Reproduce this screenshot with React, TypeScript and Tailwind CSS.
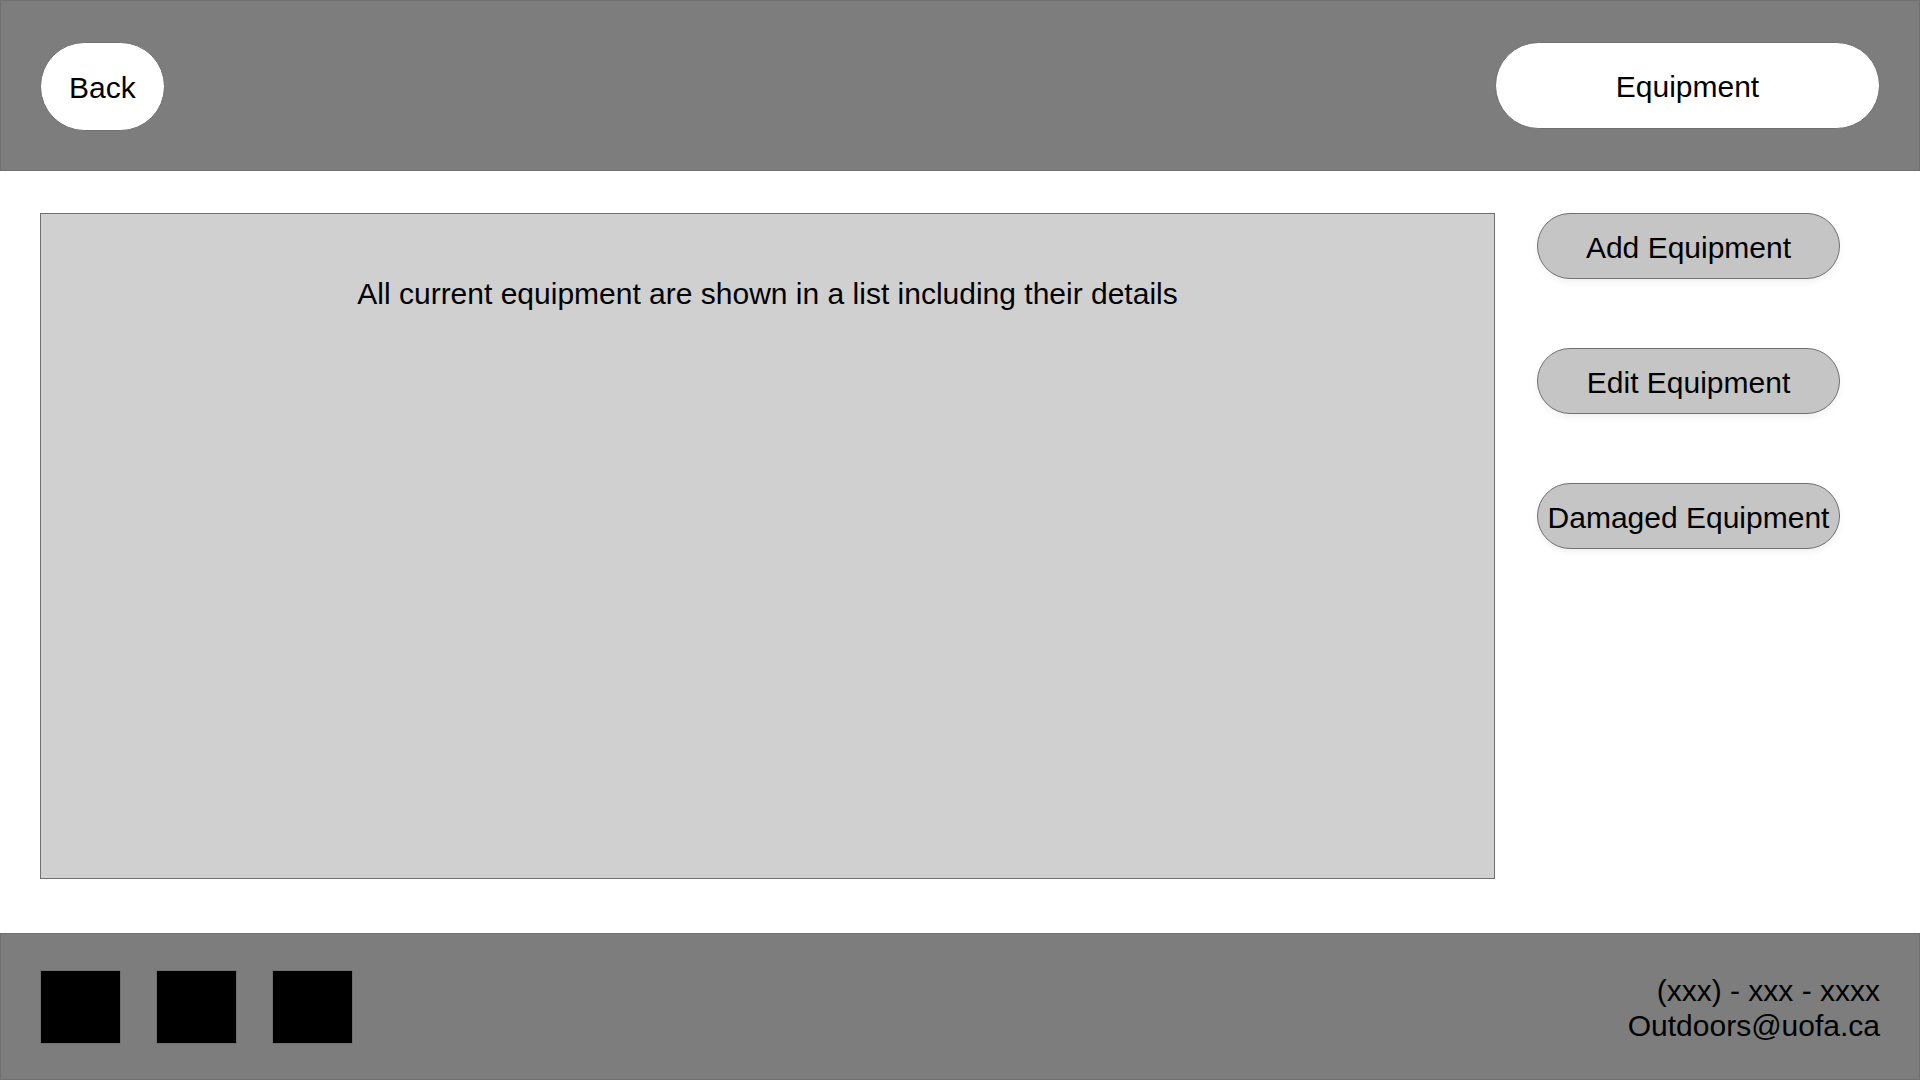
const actions = ["Add Equipment", "Edit Equipment", "Damaged Equipment"];
const socialLinks = ["Social link 1", "Social link 2", "Social link 3"];

export default function App() {
  return (
    <div className="flex min-h-screen flex-col bg-white font-['Liberation_Sans',Arial,sans-serif] text-[30px] leading-[35px] text-black">
      <header className="flex items-start justify-between border border-[#707070] bg-[#7d7d7d] px-[39px] pt-[41px] pb-[39px]">
        <button
          type="button"
          className="h-[89px] rounded-full border border-[#707070] bg-white px-7 pt-0.5"
        >
          Back
        </button>
        <h1 className="flex h-[87px] w-[385px] items-center justify-center rounded-full border border-[#707070] bg-white pt-0.5">
          Equipment
        </h1>
      </header>

      <main className="flex flex-1 gap-[42px] pt-[42px] pr-20 pb-[54px] pl-10">
        <section className="flex-1 border border-[#707070] bg-[#d0d0d0] px-8 pt-[62px] text-center">
          <p>All current equipment are shown in a list including their details</p>
        </section>
        <nav aria-label="Equipment actions" className="flex w-[303px] flex-col gap-[69px]">
          {actions.map((label) => (
            <button
              key={label}
              type="button"
              className="h-[66px] rounded-full border border-[#707070] bg-[#c5c5c5] pt-0.5 whitespace-nowrap shadow-[0_3px_6px_rgba(0,0,0,0.06)]"
            >
              {label}
            </button>
          ))}
        </nav>
      </main>

      <footer className="flex items-start justify-between border border-[#707070] bg-[#7d7d7d] px-[39px] pt-9 pb-[35px]">
        <div className="flex gap-[35px]">
          {socialLinks.map((label) => (
            <a
              key={label}
              href="#"
              aria-label={label}
              className="block h-[74px] w-[81px] border border-[#707070] bg-black"
            />
          ))}
        </div>
        <address className="pt-[3px] text-right not-italic">
          <p>(xxx) - xxx - xxxx</p>
          <a href="mailto:Outdoors@uofa.ca">Outdoors@uofa.ca</a>
        </address>
      </footer>
    </div>
  );
}
